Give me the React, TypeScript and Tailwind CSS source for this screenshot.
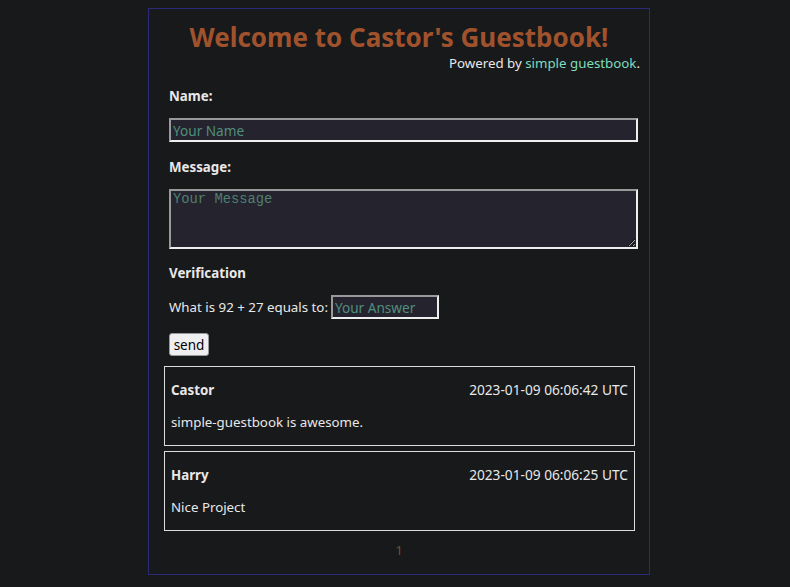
import React from 'react';

const entries = [
  { name: 'Castor', date: '2023-01-09 06:06:42 UTC', message: 'simple-guestbook is awesome.' },
  { name: 'Harry', date: '2023-01-09 06:06:25 UTC', message: 'Nice Project' },
];

export default function App() {
  return (
    <div className="min-h-[587px] bg-[#18191b] pt-2 font-['Noto_Sans',sans-serif] text-[13.3px] text-[#e8e8e8]">
      <div className="ml-[148px] h-[567px] w-[502px] border border-[#2a2a78]">
        {/* Header */}
        <h1 className="mt-[12px] text-center text-[26px] font-bold leading-[32px] text-[#a0522d]">
          Welcome to Castor's Guestbook!
        </h1>
        <p className="pr-[9px] text-right leading-[20px]">
          Powered by <a className="text-[#7fdcbc]">simple guestbook</a>.
        </p>

        {/* Form */}
        <form className="pl-[20px]">
          <label className="mt-[13px] block font-bold leading-[20px]">Name:</label>
          <input
            placeholder="Your Name"
            className="mt-[12px] block h-[24px] w-[469px] border-2 border-t-[#999] border-l-[#999] border-r-[#eee] border-b-[#eee] bg-[#25232d] px-[2px] text-[13.6px] placeholder:text-[#4f8f7e] outline-none"
          />
          <label className="mt-[15px] block font-bold leading-[20px]">Message:</label>
          <textarea
            placeholder="Your Message"
            className="mt-[12px] block h-[60px] w-[469px] resize border-2 border-t-[#999] border-l-[#999] border-r-[#eee] border-b-[#eee] bg-[#25232d] px-[2px] py-0 font-['Liberation_Mono',monospace] text-[13.8px] leading-[18px] placeholder:text-[#4f7f72] outline-none"
          />
          <label className="mt-[14px] block font-bold leading-[20px]">Verification</label>
          <div className="mt-[12px] flex items-center">
            <span className="leading-[20px]">What is 92 + 27 equals to:</span>
            <input
              placeholder="Your Answer"
              className="ml-[3px] h-[24px] w-[108px] border-2 border-t-[#999] border-l-[#999] border-r-[#eee] border-b-[#eee] bg-[#25232d] px-[2px] text-[13.6px] placeholder:text-[#4f8f7e] outline-none"
            />
          </div>
          <button
            type="button"
            className="mt-[14px] block h-[23px] w-[40px] rounded-[3px] border border-[#999] bg-[#efeff1] text-[13.5px] leading-[20px] text-black"
          >
            send
          </button>
        </form>

        {/* Entries */}
        <div className="mt-[10px] ml-[15px] flex w-[471px] flex-col gap-[5px]">
          {entries.map((e) => (
            <div key={e.name} className="h-[80px] border border-[#ddd] px-[6px] pt-[13px]">
              <div className="flex justify-between leading-[20px]">
                <span className="font-bold">{e.name}</span>
                <span className="text-[13.7px]">{e.date}</span>
              </div>
              <p className="mt-[12px] leading-[20px]">{e.message}</p>
            </div>
          ))}
        </div>

        <div className="mt-[9px] text-center leading-[20px] text-[#7a4a30]">1</div>
      </div>
    </div>
  );
}
